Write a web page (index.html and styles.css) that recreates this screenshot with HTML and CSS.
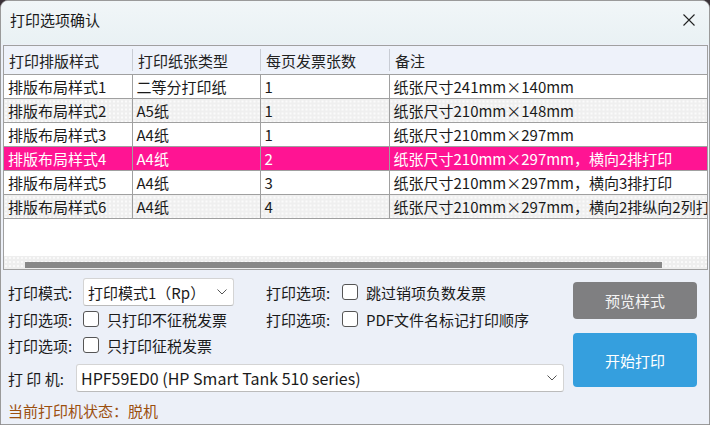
FILE: index.html
```html
<!DOCTYPE html>
<html>
<head>
<meta charset="utf8">
<title>打印选项确认</title>
<link rel="stylesheet" href="styles.css">
</head>
<body>
<div class="window">
	<div class="titlebar">
		<span class="title">打印选项确认</span>
		<svg class="close" width="12" height="12" viewBox="0 0 12 12"><path d="M0.5 0.5 L11.5 11.5 M11.5 0.5 L0.5 11.5" stroke="#222" stroke-width="1.1" fill="none"/></svg>
	</div>

	<div class="grid">
		<div class="grid-body">
			<table class="item-table">
				<colgroup>
					<col style="width:128px"><col style="width:128px"><col style="width:129px"><col style="width:340px">
				</colgroup>
				<thead>
					<tr><th>打印排版样式</th><th>打印纸张类型</th><th>每页发票张数</th><th>备注</th></tr>
				</thead>
				<tbody>
					<tr><td>排版布局样式1</td><td>二等分打印纸</td><td>1</td><td>纸张尺寸241mm×140mm</td></tr>
					<tr class="alt"><td>排版布局样式2</td><td>A5纸</td><td>1</td><td>纸张尺寸210mm×148mm</td></tr>
					<tr><td>排版布局样式3</td><td>A4纸</td><td>1</td><td>纸张尺寸210mm×297mm</td></tr>
					<tr class="selected"><td>排版布局样式4</td><td>A4纸</td><td>2</td><td>纸张尺寸210mm×297mm，横向2排打印</td></tr>
					<tr><td>排版布局样式5</td><td>A4纸</td><td>3</td><td>纸张尺寸210mm×297mm，横向3排打印</td></tr>
					<tr class="alt"><td>排版布局样式6</td><td>A4纸</td><td>4</td><td>纸张尺寸210mm×297mm，横向2排纵向2列打印</td></tr>
				</tbody>
			</table>
		</div>
		<div class="hscroll"><div class="thumb"></div></div>
	</div>

	<div class="panel">
		<div class="form">
			<div class="form-grid">
				<span class="label">打印模式:</span>
				<div class="combo combo-mode">
					<span>打印模式1（Rp）</span>
					<svg width="10" height="6" viewBox="0 0 10 6"><path d="M0.5 0.5 L5 5 L9.5 0.5" stroke="#555" stroke-width="1" fill="none"/></svg>
				</div>
				<span class="label">打印选项:</span>
				<label class="check"><i class="box"></i>跳过销项负数发票</label>

				<span class="label">打印选项:</span>
				<label class="check"><i class="box"></i>只打印不征税发票</label>
				<span class="label">打印选项:</span>
				<label class="check"><i class="box"></i>PDF文件名标记打印顺序</label>

				<span class="label">打印选项:</span>
				<label class="check"><i class="box"></i>只打印征税发票</label>
			</div>

			<div class="printer-row">
				<span class="label">打 印 机:</span>
				<div class="combo combo-printer">
					<span>HPF59ED0 (HP Smart Tank 510 series)</span>
					<svg width="10" height="6" viewBox="0 0 10 6"><path d="M0.5 0.5 L5 5 L9.5 0.5" stroke="#555" stroke-width="1" fill="none"/></svg>
				</div>
			</div>

			<div class="status">当前打印机状态：脱机</div>
		</div>

		<div class="actions">
			<div class="btn btn-gray">预览样式</div>
			<div class="btn btn-blue">开始打印</div>
		</div>
	</div>
</div>
</body>
</html>
```

FILE: styles.css
```css
body{
margin:0;
background:#3a3238;
font-family:"Noto Sans CJK SC", "Liberation Sans", sans-serif;
font-size:15px;
color:#1a1a1a;
}
.window{
width:710px;
height:425px;
box-sizing:border-box;
border:1px solid #9a9a9a;
border-radius:8px 8px 0 0;
background:#ecf0f8;
overflow:hidden;
display:flex;
flex-direction:column;
}
.titlebar{
height:43px;
flex:none;
display:flex;
align-items:center;
justify-content:space-between;
padding:0 14px 0 9px;
background:linear-gradient(#f1f6f8, #e9f1f4);
}
.title{
line-height:20px;
margin-top:-6px;
}
.close{
margin-top:-5px;
}
.grid{
margin:1px 1px 0 2px;
height:225px;
box-sizing:border-box;
border:1px solid #a0a0a0;
background:white;
display:flex;
flex-direction:column;
}
.grid-body{
flex:1;
overflow:hidden;
}
.item-table{
border-collapse:collapse;
table-layout:fixed;
width:725px;
}
.item-table th{
height:28px;
padding:0 0 0 5px;
text-align:left;
font-weight:normal;
background:#eef2fa;
color:#222;
border-bottom:1px solid #a0a0a0;
position:relative;
}
.item-table th + th{
background:linear-gradient(#c8ccd4, #c8ccd4) no-repeat left 3px / 1px 22px, #eef2fa;
padding-left:6px;
}
.item-table td{
height:23px;
line-height:23px;
padding:0 0 0 4px;
white-space:nowrap;
overflow:hidden;
border-bottom:1px solid #a0a0a0;
border-left:1px solid #a0a0a0;
}
.item-table td:first-child{
border-left:none;
}
.item-table tr.alt td{
background:radial-gradient(circle, #fcfcfc 0.7px, transparent 0.8px) 0 0 / 4px 4px, #efefef;
}
.item-table tr.selected td{
background:#ff1493;
color:white;
}
.hscroll{
height:13px;
flex:none;
background:radial-gradient(circle, #fafafa 0.7px, transparent 0.8px) 0 0 / 4px 4px, #eeeeee;
position:relative;
}
.thumb{
position:absolute;
left:21px;
width:637px;
top:6px;
height:6px;
background:#888;
}
.panel{
flex:1;
display:flex;
}
.form{
flex:1;
padding:8px 0 0 7px;
}
.form-grid{
display:grid;
grid-template-columns:75px 183px 76px auto;
grid-template-rows:28px 26px 26px;
align-items:center;
}
.label{
white-space:nowrap;
}
.combo{
box-sizing:border-box;
background:white;
border:1px solid #d4d4d4;
border-bottom-color:#bbb;
border-radius:3px;
display:flex;
align-items:center;
justify-content:space-between;
}
.combo-mode{
width:151px;
height:28px;
padding:0 6px 0 4px;
}
.combo-printer{
width:488px;
height:28px;
padding:0 6px 0 4px;
font-size:16px;
}
.check{
display:flex;
align-items:center;
white-space:nowrap;
}
.box{
width:14px;
height:14px;
border:1px solid #555;
border-radius:3px;
background:white;
margin-right:8px;
flex:none;
}
.printer-row{
display:grid;
grid-template-columns:68px auto;
align-items:center;
margin-top:6px;
}
.status{
color:#9b4f0f;
margin-top:9px;
line-height:20px;
}
.actions{
width:124px;
flex:none;
margin:12px 13px 0 9px;
display:flex;
flex-direction:column;
gap:14px;
}
.btn{
display:flex;
align-items:center;
justify-content:center;
border-radius:4px;
}
.btn-gray{
height:37px;
background:#7f7f81;
color:#f4f4f4;
}
.btn-blue{
height:54px;
background:#359fde;
color:white;
}
```
